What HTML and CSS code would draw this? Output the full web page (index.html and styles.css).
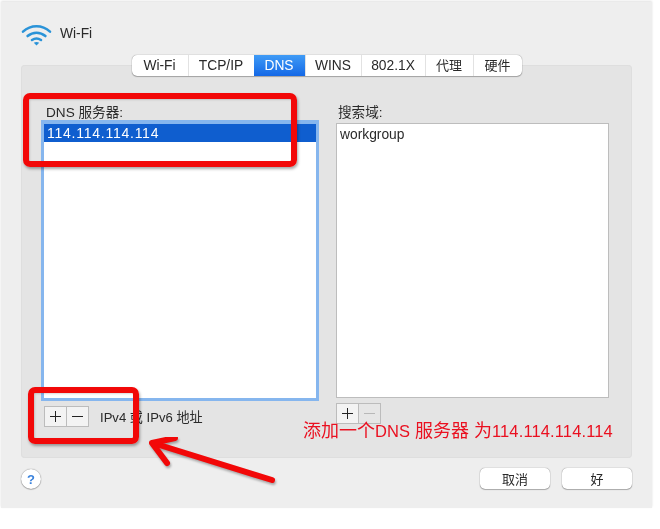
FILE: index.html
```html
<!DOCTYPE html>
<html lang="zh">
<head>
<meta charset="utf-8">
<title>Wi-Fi DNS</title>
<link rel="stylesheet" href="styles.css">
</head>
<body>
<div class="stage">
  <div class="window">
    <header class="header">
      <svg class="wifi" width="32" height="24" viewBox="0 0 32 24">
        <g fill="none" stroke="#2a93d8" stroke-width="2.6" stroke-linecap="round">
          <path d="M2 8.6 C10 1.4 21 1.4 29 8.6"/>
          <path d="M6.6 13 C12 8.6 19 8.6 24.4 13"/>
          <path d="M11 17 C14 15 17 15 20 17"/>
        </g>
        <path d="M15.5 22.6 L12.8 19.8 C14.5 18.8 16.5 18.8 18.2 19.8 Z" fill="#2a93d8"/>
      </svg>
      <span class="title">Wi-Fi</span>
    </header>
    <nav class="tabs">
      <span class="tab t1">Wi-Fi</span>
      <span class="tab t2">TCP/IP</span>
      <span class="tab t3 active">DNS</span>
      <span class="tab t4">WINS</span>
      <span class="tab t5">802.1X</span>
      <span class="tab t6 cjk">代理</span>
      <span class="tab t7 cjk">硬件</span>
    </nav>
    <section class="panel">
      <div class="col">
        <div class="label indent">DNS 服务器:</div>
        <div class="list focused">
          <div class="row selected">114.114.114.114</div>
        </div>
        <div class="controls inset">
          <div class="stepper">
            <span class="step"><svg width="13" height="13" viewBox="0 0 13 13"><path class="glyph" d="M1 6.5H12M6.5 1V12"/></svg></span>
            <span class="step"><svg width="13" height="13" viewBox="0 0 13 13"><path class="glyph" d="M1 6.5H12"/></svg></span>
          </div>
          <span class="hint">IPv4 或 IPv6 地址</span>
        </div>
      </div>
      <div class="col">
        <div class="label indent-s">搜索域:</div>
        <div class="list plain">
          <div class="row">workgroup</div>
        </div>
        <div class="controls">
          <div class="stepper">
            <span class="step"><svg width="13" height="13" viewBox="0 0 13 13"><path class="glyph" d="M1 6.5H12M6.5 1V12"/></svg></span>
            <span class="step off"><svg width="13" height="13" viewBox="0 0 13 13"><path class="glyph" d="M1 6.5H12"/></svg></span>
          </div>
        </div>
      </div>
    </section>
    <footer class="footer">
      <span class="help">?</span>
      <div class="actions">
        <span class="btn">取消</span>
        <span class="btn">好</span>
      </div>
    </footer>
  </div>
  <div class="mark mark-a"></div>
  <div class="mark mark-b"></div>
  <svg class="arrow" width="140" height="60" viewBox="0 0 140 60">
    <g fill="none" stroke="#f20808" stroke-width="6" stroke-linecap="round" stroke-linejoin="round">
      <path d="M123 43 L4 6"/>
      <path d="M26 1 L3 6 L18 26"/>
    </g>
  </svg>
  <div class="note">添加一个<span class="latin">DNS </span>服务器 为<span class="latin">114.114.114.114</span></div>
</div>
</body>
</html>
```
FILE: styles.css
```css
* { box-sizing: border-box; }
html, body { margin: 0; padding: 0; background: #fff; }
body { font-family: "Liberation Sans", "Noto Sans CJK SC", sans-serif; font-size: 13.8px; color: #2a2a2a; }
.stage { position: relative; width: 660px; height: 529px; overflow: hidden; filter: blur(.3px); }
.window {
  margin: 2px 0 0 1px;
  width: 651px;
  height: 506px;
  padding: 0 20px;
  background: #eeeeee;
  box-shadow: 0 -1px 2px rgba(0,0,0,.12);
}
.header { display: flex; align-items: center; height: 53px; padding-top: 9px; }
.wifi { margin: 3px 7px 0 0; }
.tabs {
  position: relative;
  z-index: 1;
  display: flex;
  width: 390px;
  height: 21px;
  margin: 0 0 -11px 110.5px;
  background: #fff;
  border-radius: 5px;
  box-shadow: 0 0 1px rgba(0,0,0,.55), 0 1px 1px rgba(0,0,0,.25);
  overflow: hidden;
}
.tab { display: flex; align-items: center; justify-content: center; border-left: 1px solid #e2e2e2; }
.tab:first-child { border-left: 0; }
.cjk { padding-bottom: 3px; font-size: 13px; }
.t1 { width: 56px; } .t2 { width: 66px; } .t3 { width: 51px; } .t4 { width: 56px; }
.t5 { width: 64px; } .t6 { width: 48px; } .t7 { width: 49px; }
.active { background: linear-gradient(#3f9bf6, #1468e6); color: #fff; border-left: 0; }
.panel {
  display: grid;
  grid-template-columns: 278px 273px;
  column-gap: 17px;
  height: 393px;
  padding: 39px 0 0 20px;
  background: #e4e4e4;
  border-radius: 4px;
  box-shadow: inset 0 0 0 1px #dedede;
}
.label { height: 16px; line-height: 17px; font-size: 13.6px; }
.indent { padding-left: 5px; }
.indent-s { padding-left: 2px; }
.list { background: #fff; }
.focused { height: 281px; border: 3.5px solid #86b6ee; border-top-width: 4px; }
.plain { height: 275px; margin: 3px 0; border: 1px solid #bdbdbd; }
.row { height: 18px; line-height: 19px; padding-left: 3px; }
.plain .row { padding-top: 1px; }
.selected { background: #0f5ecf; color: #fff; font-size: 14px; letter-spacing: .75px; padding-left: 3px; }
.controls { display: flex; align-items: center; gap: 11px; margin-top: 5px; }
.inset { margin-left: 3px; }
.stepper { display: flex; width: 45px; height: 21px; border: 1px solid #bcbcbc; background: #f3f3f3; }
.step { flex: 1; display: flex; align-items: center; justify-content: center; }
.step + .step { border-left: 1px solid #bcbcbc; }
.glyph { fill: none; stroke: #222; stroke-width: 1; }
.off { background: #e6e6e6; }
.off .glyph { stroke: #b8b8b8; }
.hint { font-size: 13.1px; }
.footer { display: flex; align-items: flex-start; justify-content: space-between; height: 41px; padding-top: 11px; }
.help {
  width: 20px; height: 20px; border-radius: 50%;
  display: flex; align-items: center; justify-content: center;
  background: #fff; color: #3a82dc; font-weight: 700; font-size: 13px;
  box-shadow: 0 0 1px rgba(0,0,0,.6), 0 1px 1px rgba(0,0,0,.2);
}
.actions { display: flex; gap: 12px; margin-top: -1px; }
.btn {
  width: 70px; height: 21px; display: flex; align-items: center; justify-content: center;
  background: #fff; border-radius: 5px; font-size: 13px;
  box-shadow: 0 0 1px rgba(0,0,0,.6), 0 1px 1px rgba(0,0,0,.25);
}
.mark {
  position: absolute;
  border: 6px solid #f20808;
  border-radius: 7px;
  box-shadow: 1px 2px 3px rgba(0,0,0,.35), inset 1px 1px 2px rgba(0,0,0,.15);
}
.mark-a { left: 23px; top: 93px; width: 274px; height: 74px; }
.mark-b { left: 28px; top: 387px; width: 111px; height: 57px; }
.arrow { position: absolute; left: 149px; top: 437px; filter: drop-shadow(1px 2px 1px rgba(0,0,0,.3)); }
.note { position: absolute; left: 303px; top: 420px; font-size: 18px; line-height: 22px; color: #ea1020; white-space: nowrap; }
.latin { font-size: 16.5px; letter-spacing: .13px; }
```
